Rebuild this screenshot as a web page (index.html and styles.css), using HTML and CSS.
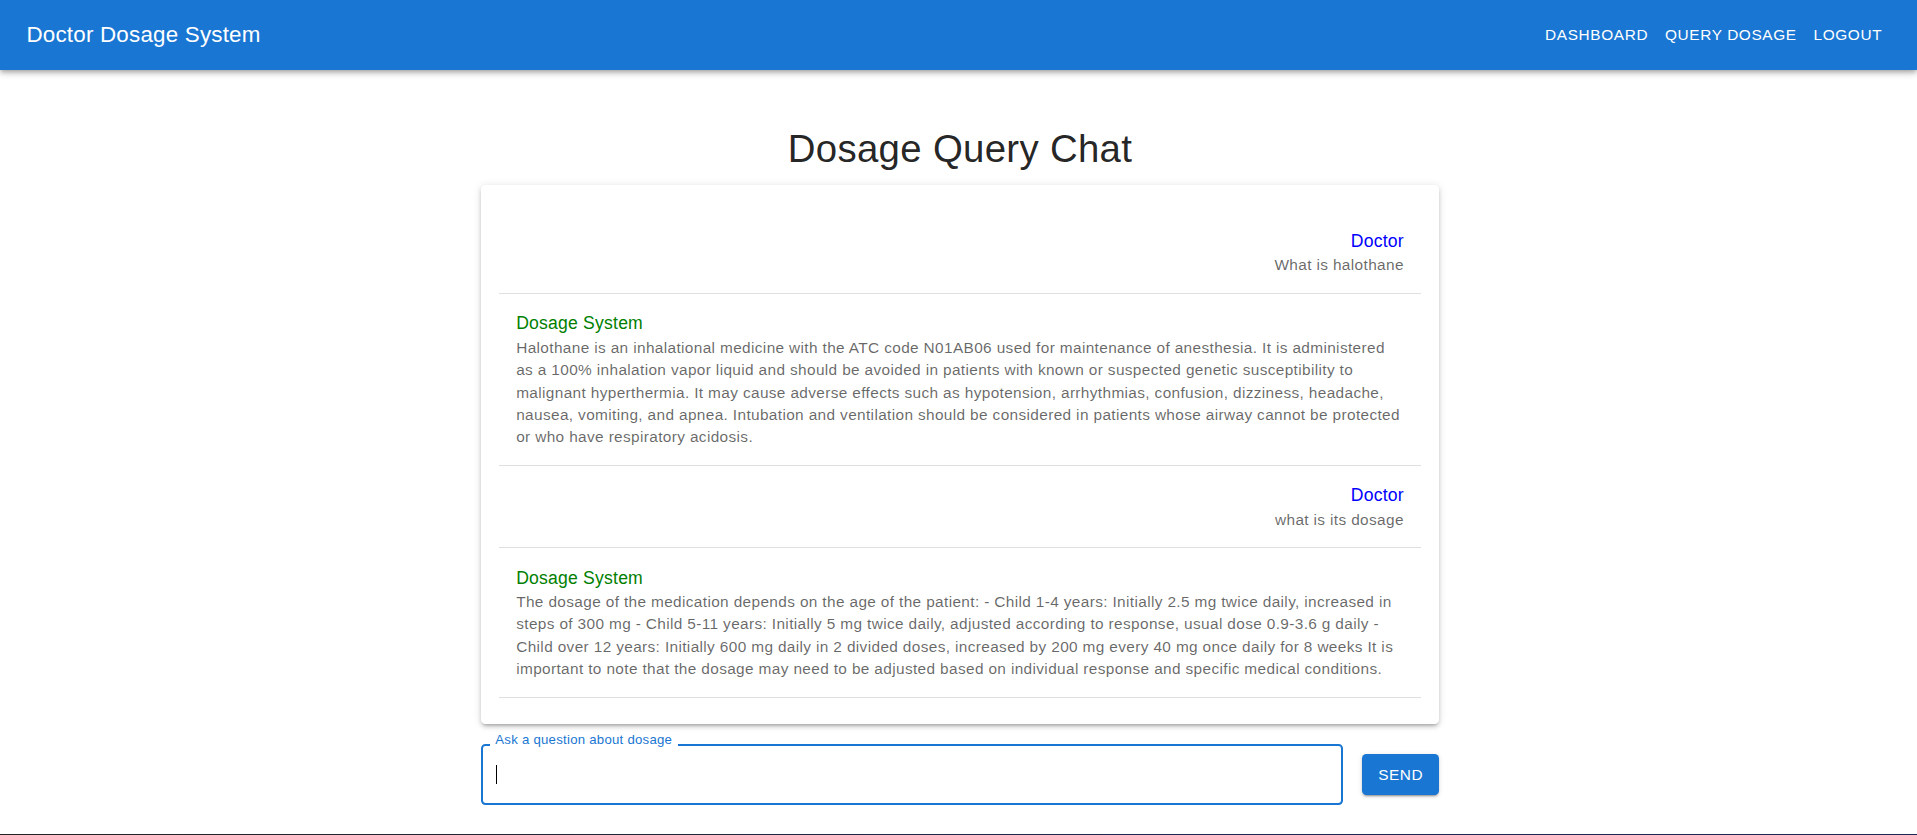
FILE: index.html
```html
<!DOCTYPE html>
<html lang="en">
<head>
<meta charset="utf-8">
<title>Doctor Dosage System</title>
<link rel="stylesheet" href="styles.css">
</head>
<body>
<header class="appbar">
  <div class="toolbar">
    <div class="brand">Doctor Dosage System</div>
    <nav class="nav">
      <a class="nav-btn" href="#">DASHBOARD</a>
      <a class="nav-btn" href="#">QUERY DOSAGE</a>
      <a class="nav-btn" href="#">LOGOUT</a>
    </nav>
  </div>
</header>
<main class="main">
  <div class="container">
    <h1 class="page-title">Dosage Query Chat</h1>
    <div class="card">
      <ul class="msg-list">
        <li class="msg msg-doctor">
          <div class="msg-primary doctor">Doctor</div>
          <p class="msg-secondary">What is halothane</p>
        </li>
        <li class="msg msg-system">
          <div class="msg-primary system">Dosage System</div>
          <p class="msg-secondary">Halothane is an inhalational medicine with the ATC code N01AB06 used for maintenance of anesthesia. It is administered as a 100% inhalation vapor liquid and should be avoided in patients with known or suspected genetic susceptibility to malignant hyperthermia. It may cause adverse effects such as hypotension, arrhythmias, confusion, dizziness, headache, nausea, vomiting, and apnea. Intubation and ventilation should be considered in patients whose airway cannot be protected or who have respiratory acidosis.</p>
        </li>
        <li class="msg msg-doctor">
          <div class="msg-primary doctor">Doctor</div>
          <p class="msg-secondary">what is its dosage</p>
        </li>
        <li class="msg msg-system">
          <div class="msg-primary system">Dosage System</div>
          <p class="msg-secondary">The dosage of the medication depends on the age of the patient: - Child 1-4 years: Initially 2.5 mg twice daily, increased in steps of 300 mg - Child 5-11 years: Initially 5 mg twice daily, adjusted according to response, usual dose 0.9-3.6 g daily - Child over 12 years: Initially 600 mg daily in 2 divided doses, increased by 200 mg every 40 mg once daily for 8 weeks It is important to note that the dosage may need to be adjusted based on individual response and specific medical conditions.</p>
        </li>
      </ul>
    </div>
    <div class="composer">
      <div class="field">
        <span class="field-label">Ask a question about dosage</span>
        <div class="field-input"><span class="caret"></span></div>
      </div>
      <button class="send-btn" type="button">SEND</button>
    </div>
  </div>
</main>
<footer class="footer"></footer>
</body>
</html>
```

FILE: styles.css
```css
* {
  box-sizing: border-box;
}

html, body {
  margin: 0;
  padding: 0;
  background: #ffffff;
  font-family: "Liberation Sans", Arial, sans-serif;
  color: rgba(0, 0, 0, 0.87);
}

.appbar {
  position: relative;
  z-index: 2;
  background: #1976d2;
  color: #ffffff;
  box-shadow: 0px 2px 4px -1px rgba(0,0,0,0.2), 0px 4px 5px 0px rgba(0,0,0,0.14), 0px 1px 10px 0px rgba(0,0,0,0.12);
}

.toolbar {
  height: 70.4px;
  padding: 0 26.4px;
  display: flex;
  align-items: center;
  justify-content: space-between;
}

.brand {
  font-size: 22.4px;
  line-height: 1.6;
  letter-spacing: 0.2px;
  font-weight: 400;
}

.nav {
  display: flex;
  align-items: center;
}

.nav-btn {
  color: #ffffff;
  text-decoration: none;
  font-size: 15.4px;
  line-height: 1.75;
  letter-spacing: 0.62px;
  padding: 6.6px 8.4px;
}

.main {
  display: flex;
  justify-content: center;
  padding-left: 3px;
}

.container {
  width: 958px;
  display: flex;
  flex-direction: column;
}

.page-title {
  margin: 55.6px 0 13.2px;
  font-size: 38.4px;
  line-height: 46.2px;
  font-weight: 400;
  letter-spacing: 0.3px;
  text-align: center;
  color: rgba(0, 0, 0, 0.87);
}

.card {
  background: #ffffff;
  border-radius: 4.4px;
  padding: 17.6px;
  box-shadow: 0px 3px 3px -2px rgba(0,0,0,0.2), 0px 3px 4px 0px rgba(0,0,0,0.14), 0px 1px 8px 0px rgba(0,0,0,0.12);
}

.msg-list {
  list-style: none;
  margin: 0;
  padding: 8.8px 0;
}

.msg {
  padding: 16.25px 17.6px;
  border-bottom: 1px solid rgba(0, 0, 0, 0.12);
}

.msg-doctor {
  text-align: right;
}

.msg-system {
  text-align: left;
}

.msg-primary {
  font-size: 17.6px;
  line-height: 26.4px;
  letter-spacing: 0.2px;
}

.msg-primary.doctor {
  color: #0000ff;
}

.msg-primary.system {
  color: #008000;
}

.msg-secondary {
  margin: 0;
  font-size: 15.4px;
  line-height: 22.4px;
  letter-spacing: 0.36px;
  color: rgba(0, 0, 0, 0.6);
}

.composer {
  margin: 20.2px 0 29px;
  display: flex;
  align-items: center;
  gap: 19px;
}

.field {
  position: relative;
  flex: 1;
}

.field-label {
  position: absolute;
  left: 8.8px;
  top: -12px;
  padding: 0 5.5px;
  background: #ffffff;
  font-size: 13.2px;
  line-height: 16px;
  letter-spacing: 0.25px;
  color: #1976d2;
}

.field-input {
  height: 61px;
  border: 2px solid #1976d2;
  border-radius: 4.4px;
  padding: 0 13.4px;
  display: flex;
  align-items: center;
}

.caret {
  width: 1px;
  height: 19px;
  background: #000000;
}

.send-btn {
  border: none;
  border-radius: 4.4px;
  background: #1976d2;
  color: #ffffff;
  font-family: "Liberation Sans", Arial, sans-serif;
  font-size: 15.4px;
  line-height: 27.5px;
  letter-spacing: 0.5px;
  padding: 6.75px 16px;
  box-shadow: 0px 3px 1px -2px rgba(0,0,0,0.2), 0px 2px 2px 0px rgba(0,0,0,0.14), 0px 1px 5px 0px rgba(0,0,0,0.12);
  cursor: pointer;
}

.footer {
  height: 40px;
  background: linear-gradient(90deg, #222222 0%, #1c2a52 60%, #1c2a52 100%);
}
```
